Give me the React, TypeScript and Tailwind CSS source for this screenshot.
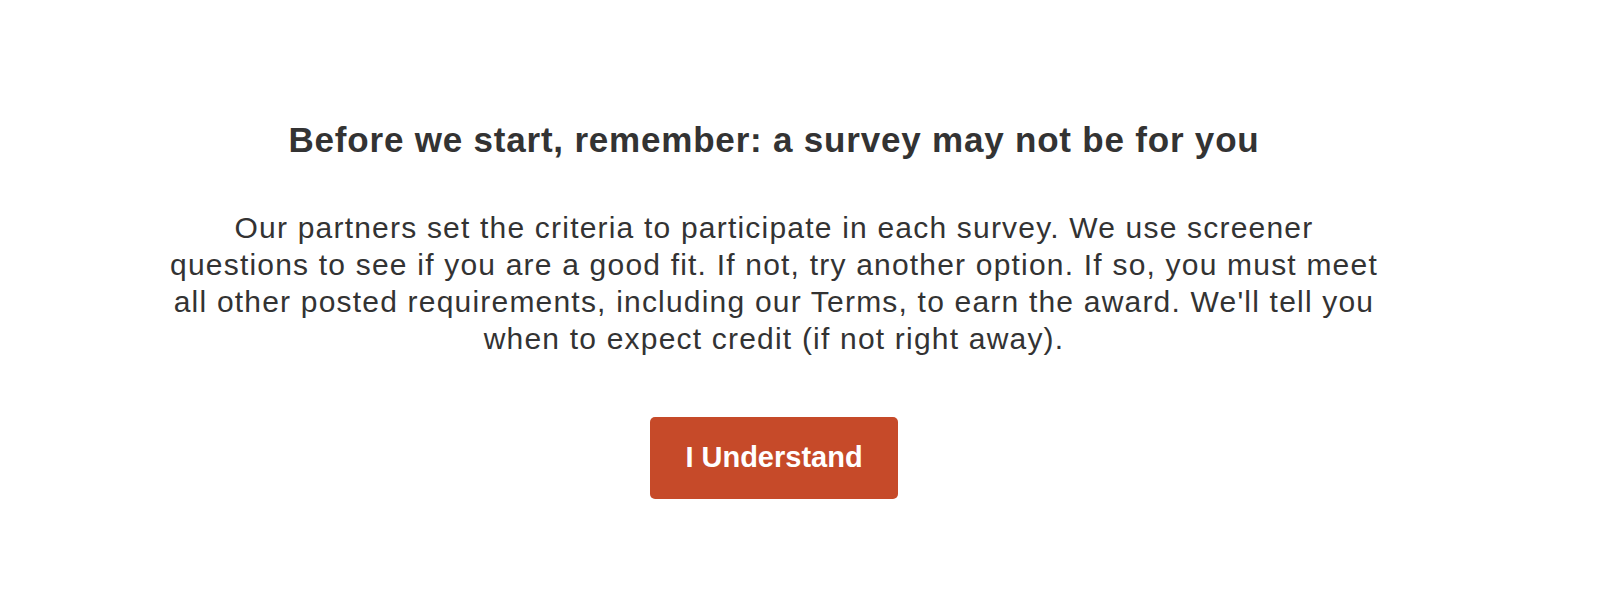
export default function App() {
  return (
    <div className="min-h-[604px] w-full bg-white pr-[52px] font-['Liberation_Sans',Arial,Helvetica,sans-serif] text-[#333333]">
      <div className="flex flex-col items-center pt-[119px] text-center">
        <h1 className="text-[35px] font-bold leading-[42px] tracking-[0.8px]">Before we start, remember: a survey may not be for you</h1>
        <p className="mt-[48px] whitespace-nowrap text-[30px] leading-[37px] tracking-[1.2px]">
          Our partners set the criteria to participate in each survey. We use screener
          <br />
          questions to see if you are a good fit. If not, try another option. If so, you must meet
          <br />
          all other posted requirements, including our Terms, to earn the award. We'll tell you
          <br />
          when to expect credit (if not right away).
        </p>
        <button
          type="button"
          className="mt-[60px] h-[82px] w-[248px] rounded-[5px] bg-[#c64a29] text-[29px] font-bold text-white"
        >
          I Understand
        </button>
      </div>
    </div>
  )
}
